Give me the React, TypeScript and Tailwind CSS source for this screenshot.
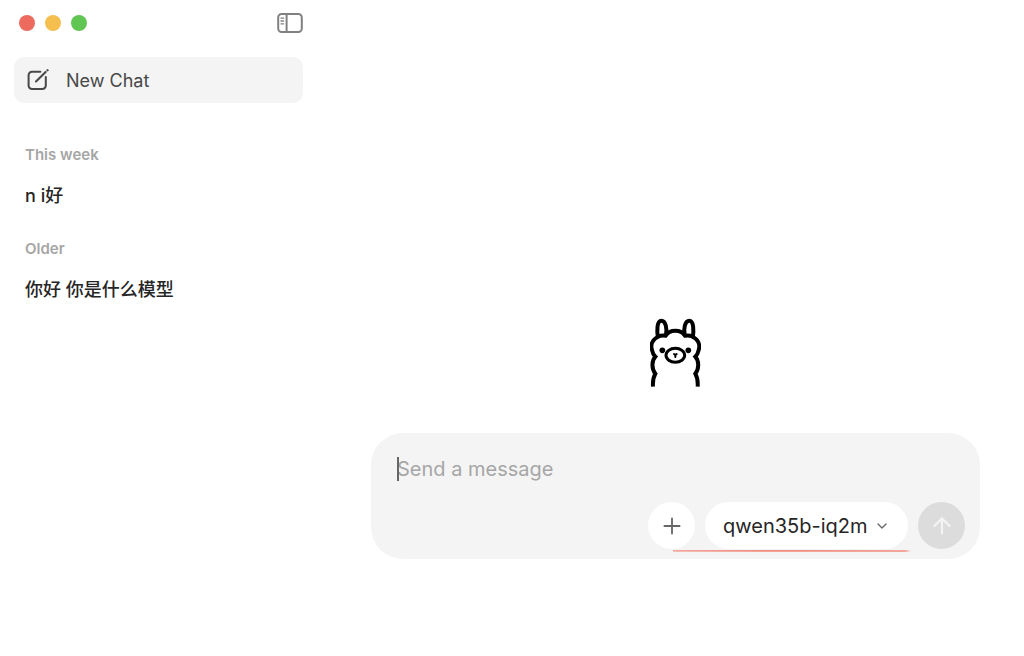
import React from "react";
import { ArrowUp, ChevronDown, Plus } from "lucide-react";

interface ChatGroup {
  label: string;
  chats: string[];
}

const groups: ChatGroup[] = [
  { label: "This week", chats: ["n i好"] },
  { label: "Older", chats: ["你好 你是什么模型"] },
];

const SidebarIcon = () => (
  <svg width="26" height="20" viewBox="0 0 26 20" fill="none" stroke="#808080">
    <rect x="1.2" y="1" width="23.6" height="18" rx="3.5" strokeWidth="2" />
    <path d="M9.6 1v18" strokeWidth="2" />
    <path d="M4 5.2h2.6M4 8h2.6M4 10.8h2.6" strokeWidth="1.3" strokeLinecap="round" />
  </svg>
);

const ComposeIcon = () => (
  <svg width="22" height="22" viewBox="0 0 22 22" fill="none" stroke="#484848" strokeLinecap="round">
    <path
      d="M13.4 2.8H5A3.4 3.4 0 0 0 1.6 6.2v10.4A3.4 3.4 0 0 0 5 20h10.400a3.400 3.400 0 0 0 3.400-3.400V8"
      strokeWidth="2"
    />
    <path d="M9 12.4L18.6 2.900" strokeWidth="2.1" />
    <path d="M20.5 1.300l.1-.1" strokeWidth="2.2" />
  </svg>
);

const Llama = () => (
  <svg width="51" height="69" viewBox="45 23 153 207" fill="none" stroke="#000" strokeWidth="12">
    <path d="M69 84C65 60 66 31 79 31S97 54 93 76" />
    <path d="M173 84C177 60 176 31 163 31S145 54 149 76" />
    <path d="M68 79Q80 74 92 76C104 56 138 56 150 76Q162 74 174 79" />
    <path d="M69 79C52 88 46 104 51 119C53 130 57 135 61 139C50 151 49 175 61 190C55 200 53 214 54 229" />
    <path d="M173 79C190 88 196 104 191 119C189 130 185 135 181 139C192 151 193 175 181 190C187 200 189 214 188 229" />
    <ellipse cx="121" cy="135" rx="28" ry="21" strokeWidth="9" />
    <circle cx="82" cy="120" r="8.5" fill="#000" stroke="none" />
    <circle cx="160" cy="120" r="8.5" fill="#000" stroke="none" />
    <path d="M117 131l4 3l4-3M121 134v6" strokeWidth="6" strokeLinecap="round" />
  </svg>
);

const Sidebar = () => (
  <aside className="w-[327px] shrink-0 pl-[14px] pr-6">
    <div className="flex h-[46px] items-center justify-between pl-[5px]">
      <div className="flex gap-[10px]">
        <span className="size-4 rounded-full bg-[#ec6a5e]" />
        <span className="size-4 rounded-full bg-[#f4bf4f]" />
        <span className="size-4 rounded-full bg-[#61c554]" />
      </div>
      <button aria-label="Toggle sidebar">
        <SidebarIcon />
      </button>
    </div>
    <button className="mt-[11px] flex h-[46px] w-full items-center gap-[17px] rounded-[10px] bg-[#f4f4f4] pl-[13px] text-[18px] text-[#484848]">
      <ComposeIcon />
      New Chat
    </button>
    <nav className="mt-10 space-y-7 pl-[11px]">
      {groups.map((group) => (
        <section key={group.label}>
          <h2 className="text-[15px] leading-6 font-semibold text-[#a6a6a6]">{group.label}</h2>
          {group.chats.map((chat) => (
            <a key={chat} href="#" className="mt-4 block text-[18px] leading-[26px] font-medium text-[#262626]">
              {chat}
            </a>
          ))}
        </section>
      ))}
    </nav>
  </aside>
);

const Composer = () => (
  <form className="mt-[46px] w-full rounded-[32px] bg-[#f4f4f4] pt-5 pr-[15px] pb-[10px] pl-[26px]">
    <div className="relative">
      <input
        aria-label="Message"
        placeholder="Send a message"
        className="block h-8 w-full bg-transparent text-[20px] text-[#262626] outline-none placeholder:text-[#a6a6a6]"
      />
      <span className="absolute top-1 left-0 h-6 w-[2px] bg-[#666666]" />
    </div>
    <div className="relative mt-[17px] flex justify-end gap-[10px]">
      <button type="button" aria-label="Add" className="flex size-[47px] items-center justify-center rounded-full bg-white text-[#666666]">
        <Plus size={26} strokeWidth={1.7} />
      </button>
      <div className="relative">
        <select
          aria-label="Model"
          className="h-[47px] w-[203px] appearance-none rounded-full bg-white pl-[18px] text-[20px] text-[#262626] outline-none"
        >
          <option>qwen35b-iq2m</option>
        </select>
        <ChevronDown className="pointer-events-none absolute top-4 right-[18px] text-[#666666]" size={16} strokeWidth={2} />
      </div>
      <button type="button" aria-label="Send" className="flex size-[47px] items-center justify-center rounded-full bg-[#dcdcdc] text-[#f4f4f4]">
        <ArrowUp size={26} strokeWidth={2} />
      </button>
      {/* red marker line under the model picker */}
      <svg className="absolute right-[54px] -bottom-1" width="239" height="4" viewBox="0 0 239 4" fill="#f28b7d">
        <path d="M1 1.2L120 1L233 1.2L239 2L233 2.8L120 2.8L1 2.4Z" />
      </svg>
    </div>
  </form>
);

export default function App() {
  return (
    <div className="flex min-h-screen bg-white font-[Inter,'Noto_Sans_CJK_SC',sans-serif]">
      <Sidebar />
      <main className="flex min-w-0 flex-1 flex-col items-center justify-center px-11 pt-[221px]">
        <Llama />
        <Composer />
      </main>
    </div>
  );
}
